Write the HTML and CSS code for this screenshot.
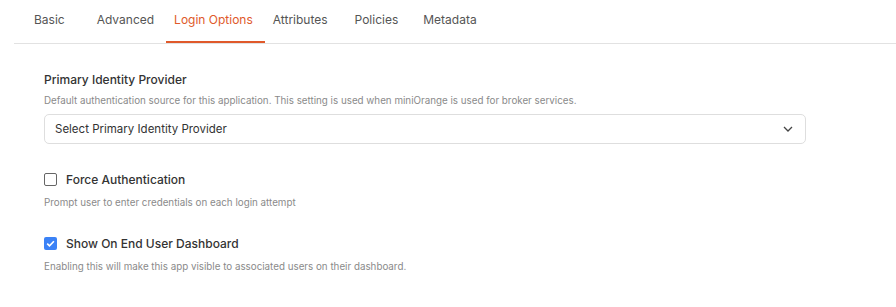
FILE: index.html
```html
<!DOCTYPE html>
<html>
<head>
<meta charset="utf-8">
<link rel="stylesheet" href="styles.css">
</head>
<body>
<div class="page">
  <nav class="tabs">
    <div class="tab t-basic">Basic</div>
    <div class="tab t-adv">Advanced</div>
    <div class="tab active">Login Options</div>
    <div class="tab t-attr">Attributes</div>
    <div class="tab t-pol">Policies</div>
    <div class="tab t-meta">Metadata</div>
  </nav>
  <div class="content">
    <div class="field">
      <div class="label">Primary Identity Provider</div>
      <div class="desc">Default authentication source for this application. This setting is used when miniOrange is used for broker services.</div>
      <div class="select">
        <span>Select Primary Identity Provider</span>
        <svg class="chev" width="10" height="6" viewBox="0 0 10 6"><path d="M1 1l4 4 4-4" fill="none" stroke="#444" stroke-width="1.3"/></svg>
      </div>
    </div>
    <div class="check-field first">
      <div class="check-row">
        <span class="box"></span>
        <span class="check-label">Force Authentication</span>
      </div>
      <div class="desc">Prompt user to enter credentials on each login attempt</div>
    </div>
    <div class="check-field">
      <div class="check-row">
        <span class="box checked"><svg width="13" height="13" viewBox="0 0 13 13"><path d="M3.2 6.6l2.3 2.3 4.4-4.6" fill="none" stroke="#fff" stroke-width="1.6"/></svg></span>
        <span class="check-label">Show On End User Dashboard</span>
      </div>
      <div class="desc">Enabling this will make this app visible to associated users on their dashboard.</div>
    </div>
  </div>
</div>
</body>
</html>
```

FILE: styles.css
```css
* { box-sizing: border-box; }
html, body { margin: 0; padding: 0; background: #fff; }
body { font-family: Inter, "Noto Sans", "Liberation Sans", sans-serif; color: #333; }
.page { width: 896px; height: 307px; overflow: hidden; }
.tabs {
  display: flex;
  margin-left: 14px;
  height: 44px;
  border-bottom: 1px solid #e2e2e2;
}
.tab {
  font-size: 12px;
  color: #555;
  padding: 0 8px;
  height: 43px;
  line-height: 40px;
  white-space: nowrap;
}
.t-basic { margin-left: 12px; }
.t-adv { margin-left: 16px; }
.tab.active {
  margin-left: 4px;
  padding: 0 12px 0 8px;
  color: #e0592a;
  border-bottom: 2px solid #e0592a;
}
.t-attr { margin-left: 0; }
.t-pol { margin-left: 11px; }
.t-meta { margin-left: 9px; }
.content { padding: 27px 0 0 44px; }
.field { width: 762px; }
.label { font-size: 12px; font-weight: 500; color: #333; line-height: 18px; }
.desc { font-size: 9.8px; color: #8a8a8a; line-height: 14px; }
.field .desc { margin-top: 5px; }
.select {
  margin-top: 6px;
  height: 30px;
  border: 1px solid #dedede;
  border-radius: 5px;
  display: flex;
  align-items: center;
  justify-content: space-between;
  padding: 0 12px 0 10px;
  font-size: 11.5px;
  color: #333;
}
.check-field.first { margin-top: 27px; }
.check-field { margin-top: 25px; }
.check-row { display: flex; align-items: center; height: 16px; }
.box {
  width: 13px; height: 13px;
  border: 1.5px solid #666;
  border-radius: 2px;
  margin-right: 9px;
  display: flex;
}
.box.checked { background: #3b82f6; border-color: #3b82f6; border-width: 0; }
.check-label { font-size: 12px; font-weight: 500; color: #333; }
.check-field .desc { margin-top: 9px; }
```
